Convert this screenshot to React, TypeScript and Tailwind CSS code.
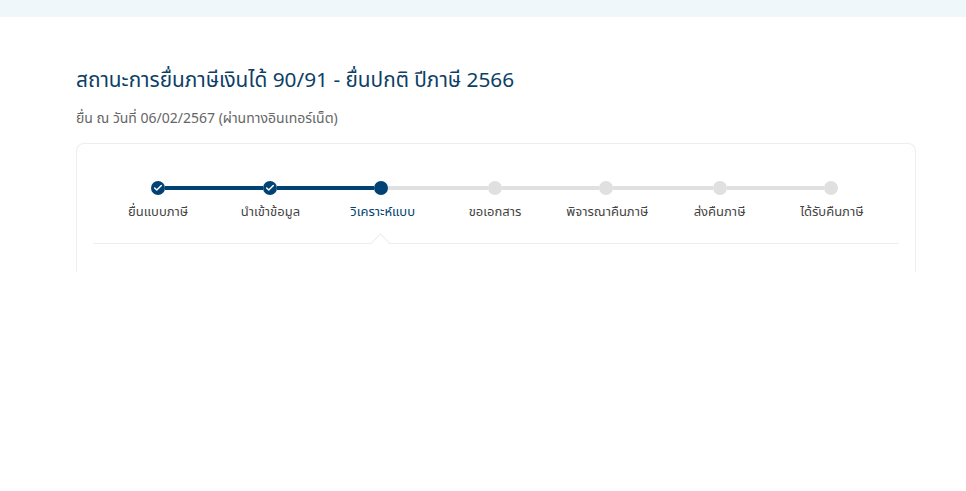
import { Check } from "lucide-react";

const steps = ["ยื่นแบบภาษี", "นำเข้าข้อมูล", "วิเคราะห์แบบ", "ขอเอกสาร", "พิจารณาคืนภาษี", "ส่งคืนภาษี", "ได้รับคืนภาษี"];
const gaps = ["w-[98px]", "w-[97px]", "w-[100px]", "w-[97px]", "w-[100px]", "w-[97px]"];
const current = 2;

export default function App() {
  return (
    <div className="min-h-screen bg-white font-['Noto_Sans','Noto_Sans_Thai','Open_Sans',sans-serif]">
      <div className="h-[17px] bg-[#f0f7fa]" />
      <div className="px-[76px] pr-[50px] pt-[48px]">
        <h1 className="text-[20.8px] leading-[28px] font-[450] text-[#0d3f66]">
          สถานะการยื่นภาษีเงินได้ 90/91 - ยื่นปกติ ปีภาษี 2566
        </h1>
        <p className="mt-[15px] text-[14px] leading-[20px] text-[#666666]">
          ยื่น ณ วันที่ 06/02/2567 (ผ่านทางอินเทอร์เน็ต)
        </p>
        <div className="mt-[15px] h-[129px] rounded-t-lg border border-b-0 border-[#eeeeee] px-4 pt-[37px]">
          <div className="flex items-center pl-[58px]">
            {steps.map((s, i) => (
              <div key={s} className="flex items-center">
                <div
                  className={
                    i <= current
                      ? "flex h-[14px] w-[14px] items-center justify-center rounded-full bg-[#004274]"
                      : "h-[14px] w-[14px] rounded-full bg-[#e0e0e0]"
                  }
                >
                  {i < current && <Check size={10} strokeWidth={3.5} className="text-white" />}
                </div>
                {i < gaps.length && (
                  <div className={`h-1 ${gaps[i]} ${i < current ? "bg-[#004274]" : "bg-[#e0e0e0]"}`} />
                )}
              </div>
            ))}
          </div>
          <div className="mt-[7px] ml-[9px] grid w-[786px] grid-cols-7">
            {steps.map((s, i) => (
              <div
                key={s}
                className={`text-center text-[13px] leading-[18px] ${i === current ? "text-[#004274]" : "text-[#444444]"}`}
              >
                {s}
              </div>
            ))}
          </div>
          <div className="relative mt-[23px] h-px bg-[#eeeeee]">
            <div className="absolute left-[281px] top-[-7px] h-[13px] w-[13px] rotate-45 border-l border-t border-[#eeeeee] bg-white" />
          </div>
        </div>
      </div>
    </div>
  );
}
